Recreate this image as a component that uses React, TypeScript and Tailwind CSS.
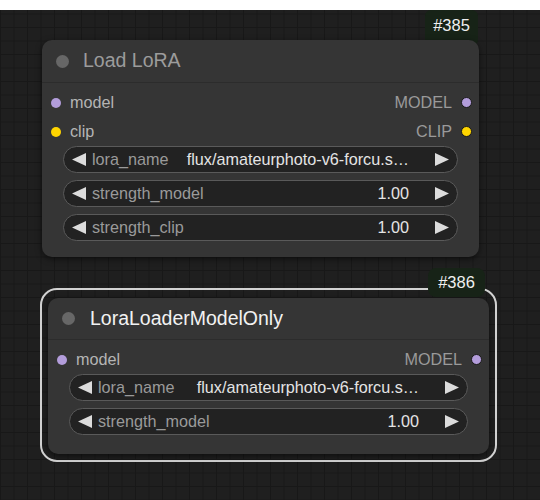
import React from "react";

const font = { fontFamily: '"Liberation Sans", Arial, sans-serif' };

function LeftArrow() {
  return (
    <svg width="14" height="13" viewBox="0 0 14 13" className="shrink-0">
      <polygon points="14,0 14,13 0,6.5" fill="#dcdcdc" />
    </svg>
  );
}
function RightArrow() {
  return (
    <svg width="14" height="13" viewBox="0 0 14 13" className="shrink-0">
      <polygon points="0,0 0,13 14,6.5" fill="#dcdcdc" />
    </svg>
  );
}

function Widget({ label, value }: { label: string; value: string }) {
  return (
    <div className="mx-[21px] flex h-[27px] items-center rounded-full border border-[#5a5a5a] bg-[#222222] pl-[8px] pr-[8px] text-[16.2px] leading-none">
      <LeftArrow />
      <span className="ml-[6px] text-[#9a9a9a]">{label}</span>
      <span className="flex-1" />
      <span className="mr-[26px] whitespace-nowrap text-[#e4e4e4]">{value}</span>
      <RightArrow />
    </div>
  );
}

function SlotRow({
  left,
  right,
  color,
}: {
  left: string;
  right: string;
  color: string;
}) {
  return (
    <div className="flex h-[29px] items-center pl-[9px] pr-[7px] text-[16.2px] leading-none">
      <span className="h-[10px] w-[10px] rounded-full" style={{ background: color }} />
      <span className="ml-[9px] text-[#b4b4b4]">{left}</span>
      <span className="flex-1" />
      <span className="text-[#9a9a9a]">{right}</span>
      <span
        className="ml-[9px] h-[11px] w-[11px] rounded-full border border-[#1a1a1a]"
        style={{ background: color }}
      />
    </div>
  );
}

export default function App() {
  return (
    <div
      className="relative h-[500px] w-[540px] overflow-hidden bg-[#1f1f1f] [background-image:linear-gradient(to_right,#181818_1px,transparent_1px),linear-gradient(to_bottom,#181818_1px,transparent_1px)] [background-size:13.5px_13.5px]"
      style={font}
    >
      <div className="h-[10px] w-full bg-white" />

      {/* badge #385 */}
      <div className="absolute left-[425px] top-[10px] flex h-[36px] w-[53px] items-start justify-center rounded-[6px] bg-[#172317] pt-[7px] text-[16.5px] leading-none text-[#f0f0f0]">
        #385
      </div>

      {/* Node 1 */}
      <div className="absolute left-[42px] top-[40px] w-[437px] rounded-[10px] bg-[#353535] shadow-[0_2px_6px_rgba(0,0,0,0.55)]">
        <div className="flex h-[43px] items-center border-b border-[#2c2c2c] pl-[14px]">
          <span className="h-[13px] w-[13px] rounded-full bg-[#676767]" />
          <span className="ml-[14px] text-[19.5px] leading-none text-[#9c9c9c]">Load LoRA</span>
        </div>
        <div className="pt-[5px]" />
        <SlotRow left="model" right="MODEL" color="#b39ddb" />
        <SlotRow left="clip" right="CLIP" color="#ffd500" />
        <div className="flex flex-col gap-[7px] pb-[16px]">
          <Widget label="lora_name" value="flux/amateurphoto-v6-forcu.s…" />
          <Widget label="strength_model" value="1.00" />
          <Widget label="strength_clip" value="1.00" />
        </div>
      </div>

      {/* Node 2 selection outline */}
      <div className="absolute left-[40px] top-[288px] w-[457px] rounded-[17px] border-2 border-[#d2d2d2] px-[6px] pb-[6px] pt-[8px]">
        <div className="rounded-[10px] bg-[#353535] shadow-[0_2px_6px_rgba(0,0,0,0.55)]">
          <div className="flex h-[42px] items-center border-b border-[#2c2c2c] pl-[14px]">
            <span className="h-[13px] w-[13px] rounded-full bg-[#676767]" />
            <span className="ml-[15px] text-[19.5px] leading-none text-[#f2f2f2]">LoraLoaderModelOnly</span>
          </div>
          <div className="pt-[5px]" />
          <SlotRow left="model" right="MODEL" color="#b39ddb" />
          <div className="flex flex-col gap-[7px] pb-[19px]">
            <Widget label="lora_name" value="flux/amateurphoto-v6-forcu.s…" />
            <Widget label="strength_model" value="1.00" />
          </div>
        </div>
      </div>

      {/* badge #386 */}
      <div className="absolute left-[428px] top-[268px] flex h-[29px] w-[57px] items-center justify-center rounded-[8px] bg-[#172317] text-[16.5px] leading-none text-[#f0f0f0]">
        #386
      </div>
    </div>
  );
}
